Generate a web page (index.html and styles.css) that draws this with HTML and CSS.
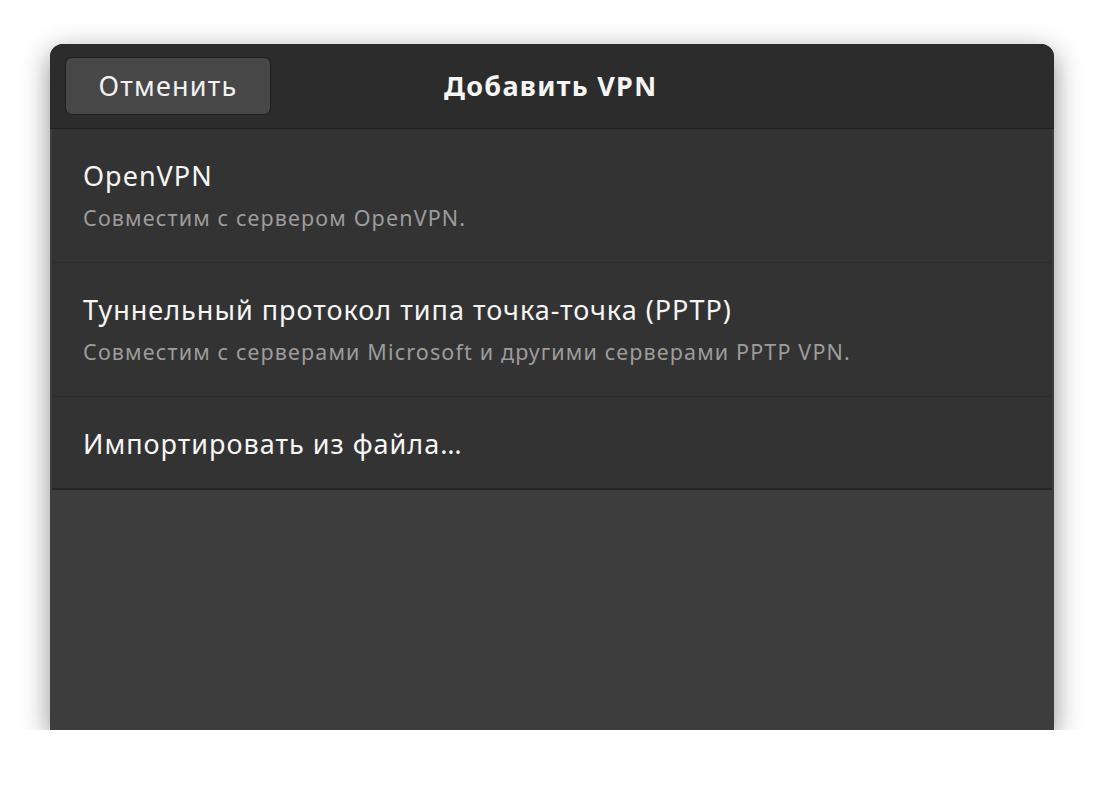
FILE: index.html
```html
<!DOCTYPE html>
<html lang="ru">

<head>
  <meta charset="UTF-8">
  <title>Добавить VPN</title>
  <link rel="stylesheet" href="styles.css">
</head>

<body>

  <div class="dialog">
    <div class="header">
      <button class="cancel">Отменить</button>
      <div class="title">Добавить VPN</div>
    </div>

    <div class="list">
      <div class="row">
        <div class="row-title">OpenVPN</div>
        <div class="row-sub">Совместим с сервером OpenVPN.</div>
      </div>
      <div class="row">
        <div class="row-title">Туннельный протокол типа точка-точка (PPTP)</div>
        <div class="row-sub">Совместим с серверами Microsoft и другими серверами PPTP VPN.</div>
      </div>
      <div class="row single">
        <div class="row-title">Импортировать из файла…</div>
      </div>
    </div>

    <div class="filler"></div>
  </div>

</body>

</html>
```

FILE: styles.css
```css
body {
  margin: 0;
  background-color: #ffffff;
  font-family: "Noto Sans", "Open Sans", sans-serif;
}

.dialog {
  width: 1004px;
  height: 686px;
  margin: 44px 0 0 50px;
  background-color: #3d3d3d;
  border-radius: 13px 13px 0 0;
  box-shadow: 0 8px 28px rgba(0, 0, 0, 0.45);
  display: flex;
  flex-direction: column;
  overflow: hidden;
}

.header {
  height: 85px;
  flex-shrink: 0;
  background-color: #2c2c2c;
  border-bottom: 1px solid #1f1f1f;
  display: flex;
  align-items: center;
  padding-left: 15px;
  box-sizing: border-box;
  position: relative;
}

.cancel {
  width: 206px;
  height: 58px;
  background-color: #474747;
  border: 1px solid #1e1e1e;
  border-radius: 7px;
  color: #f2f2f2;
  font-family: inherit;
  font-size: 27px;
  letter-spacing: 1.2px;
  margin-top: -1px;
}

.title {
  position: absolute;
  left: 394px;
  top: 0;
  line-height: 84px;
  color: #f6f6f6;
  font-weight: bold;
  font-size: 27px;
  letter-spacing: 1.3px;
}

.list {
  margin: 0 2px;
  background-color: #333333;
  border-bottom: 2px solid #252525;
}

.row {
  height: 134px;
  padding: 31px 0 0 31px;
  box-sizing: border-box;
  border-bottom: 1px solid #2b2b2b;
}

.row.single {
  height: 91px;
  padding-top: 31px;
  border-bottom: none;
}

.row-title {
  color: #f6f6f6;
  font-size: 27px;
  line-height: 32px;
  letter-spacing: 1px;
}

.row-sub {
  color: #9c9c9c;
  font-size: 21.5px;
  line-height: 26px;
  letter-spacing: 1.15px;
  margin-top: 13px;
}

.filler {
  flex: 1;
}
```
